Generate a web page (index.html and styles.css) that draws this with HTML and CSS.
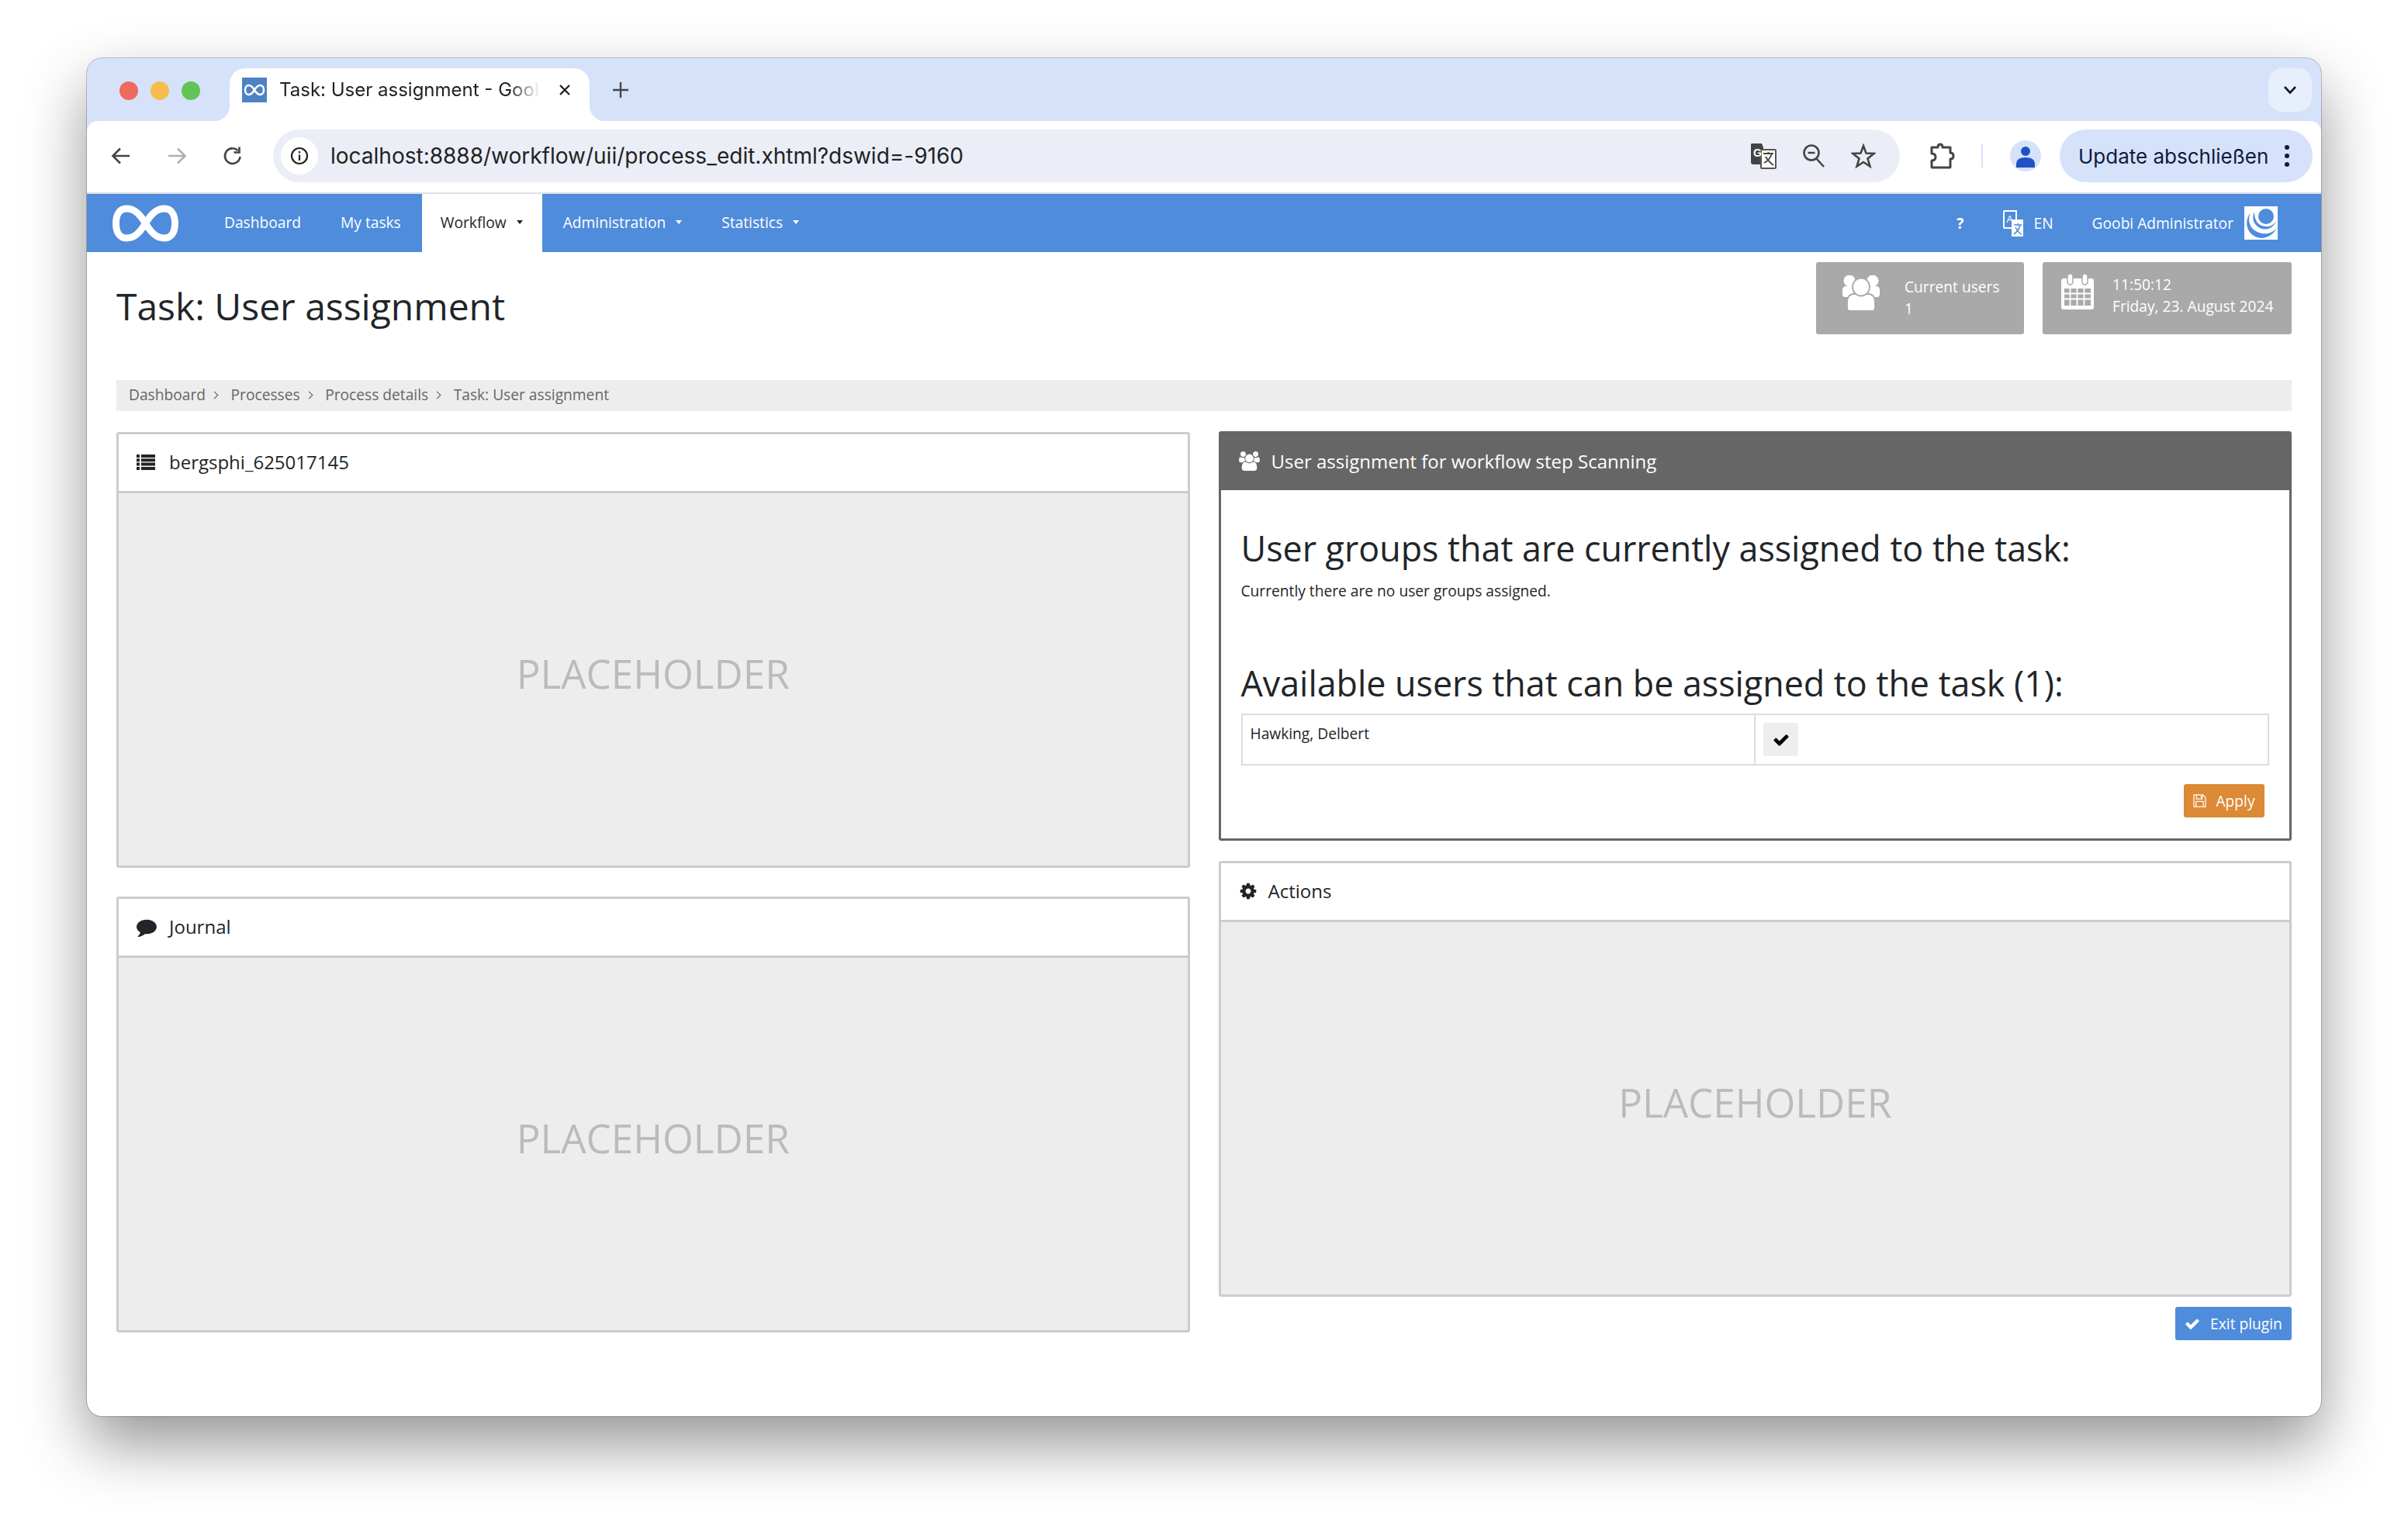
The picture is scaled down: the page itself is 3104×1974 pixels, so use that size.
FILE: index.html
```html
<!doctype html>
<html lang="en">
  <head>
    <meta charset="UTF-8" />
    <title>Task: User assignment - Goobi</title>
    <link rel="stylesheet" href="styles.css">
  </head>
  <body>
    <div class="window">
      <div class="tabstrip">
        <div class="lights">
          <span class="light light-red"></span>
          <span class="light light-yellow"></span>
          <span class="light light-green"></span>
        </div>
        <div class="tab">
          <span class="favicon">
            <svg viewBox="0 0 32 32" width="32" height="32"><path d="M16 16C13 11 11 10 8.500 10C6 10 4 12.500 4 16C4 19.500 6 22 8.500 22C11 22 13 21 16 16C19 11 21 10 23.500 10C26 10 28 12.500 28 16C28 19.500 26 22 23.500 22C21 22 19 21 16 16Z" fill="none" stroke="#fff" stroke-width="2.500"/></svg>
          </span>
          <span class="tab-title">Task: User assignment - Goobi</span>
          <svg class="tab-close" viewBox="0 0 20 20" width="20" height="20"><path d="M4 4L16 16M16 4L4 16" stroke="#222" stroke-width="2.400"/></svg>
        </div>
        <svg class="new-tab" viewBox="0 0 22 22" width="22" height="22"><path d="M11 1V21M1 11H21" stroke="#444" stroke-width="2.400"/></svg>
        <div class="tab-menu">
          <svg viewBox="0 0 18 12" width="18" height="12"><path d="M2 2L9 9.500L16 2" fill="none" stroke="#1a1a2a" stroke-width="2.600"/></svg>
        </div>
      </div>

      <div class="toolbar">
        <div class="tool-nav">
          <svg viewBox="0 0 26 26" width="26" height="26"><path d="M24 13H3M12 3.500L2.500 13L12 22.500" fill="none" stroke="#444" stroke-width="2.600"/></svg>
          <svg viewBox="0 0 26 26" width="26" height="26"><path d="M2 13H23M14 3.500L23.500 13L14 22.500" fill="none" stroke="#b0b0b0" stroke-width="2.600"/></svg>
          <svg viewBox="0 0 26 26" width="26" height="26"><path d="M22.500 14A9.800 9.800 0 1 1 19.500 6" fill="none" stroke="#444" stroke-width="2.600"/><path d="M21.500 1.500V8.500H14.500" fill="none" stroke="#444" stroke-width="2.600"/></svg>
        </div>
        <div class="address">
          <span class="site-info">
            <svg viewBox="0 0 24 24" width="24" height="24"><circle cx="12" cy="12" r="10" fill="none" stroke="#222" stroke-width="2.200"/><path d="M12 10.500V18M12 6V8.500" stroke="#222" stroke-width="2.200"/></svg>
          </span>
          <span class="url">localhost:8888/workflow/uii/process_edit.xhtml?dswid=-9160</span>
          <div class="address-icons">
            <svg viewBox="0 0 34 34" width="34" height="34"><path d="M2 1H15L17 6V28H4Q1 28 1 25V2Z" fill="#444"/><rect x="14" y="9" width="19" height="24" rx="1" fill="#fff" stroke="#555" stroke-width="2"/><text x="4" y="18" class="g-glyph">G</text><path d="M17 14H30M23.500 12V14M28 14C26 20 22 24 18 26M20 18C22 22 25 25 30 29" fill="none" stroke="#444" stroke-width="1.800"/></svg>
            <svg viewBox="0 0 32 32" width="32" height="32"><circle cx="13" cy="12" r="9.500" fill="none" stroke="#444" stroke-width="2.600"/><path d="M8.500 12H17.500M19 19L29 30" fill="none" stroke="#444" stroke-width="2.600"/></svg>
            <svg viewBox="0 0 32 32" width="32" height="32"><path d="M16 3L19.500 12.500L29.500 13L21.500 19.500L24.500 29.500L16 24L7.500 29.500L10.500 19.500L2.500 13L12.500 12.500Z" fill="none" stroke="#444" stroke-width="2.600"/></svg>
          </div>
        </div>
        <svg class="ext-icon" viewBox="0 0 34 34" width="34" height="34"><path d="M4 6H12Q12 2 15 2Q18 2 18 6H28V13Q32 13 32 17Q32 21 28 21V31Q28 32 27 32H5Q4 32 4 31V23Q9 23 9 18.500Q9 14 4 14Z" fill="none" stroke="#444" stroke-width="3" stroke-linejoin="round"/></svg>
        <span class="tool-sep"></span>
        <span class="profile">
          <svg viewBox="0 0 24 30" width="24" height="30"><circle cx="12" cy="8" r="6" fill="#1f52c4"/><path d="M0 29V25Q0 16 12 16Q24 16 24 25V29Z" fill="#1f52c4"/></svg>
        </span>
        <div class="update">
          <span>Update abschließen</span>
          <span class="update-dots"><i></i><i></i><i></i></span>
        </div>
      </div>

      <nav class="topnav">
        <svg class="logo" viewBox="0 0 85 48" width="85" height="48"><path d="M42.500 24C34 10 27 5 18 5C9 5 4.500 13 4.500 24C4.500 35 9 43 18 43C27 43 34 38 42.500 24C51 10 58 5 67 5C76 5 80.500 13 80.500 24C80.500 35 76 43 67 43C58 43 51 38 42.500 24Z" fill="none" stroke="#fff" stroke-width="9"/></svg>
        <a class="nav-item">Dashboard</a>
        <a class="nav-item">My tasks</a>
        <a class="nav-item nav-active">Workflow<span class="caret"></span></a>
        <a class="nav-item">Administration<span class="caret"></span></a>
        <a class="nav-item">Statistics<span class="caret"></span></a>
        <div class="nav-right">
          <span class="nav-help">?</span>
          <span class="nav-lang">
            <svg viewBox="0 0 26 34" width="26" height="34"><path d="M2 1H17V23H2Q1 23 1 22V2Q1 1 2 1Z" fill="none" stroke="#fff" stroke-width="2"/><rect x="11" y="12" width="15" height="22" rx="1" fill="#fff"/><text x="4.500" y="16" class="lang-glyph">A</text><path d="M14 19H24M19 17V19M22 19C21 24 18 28 14 31M16 22C18 26 20 29 24 31" fill="none" stroke="#4f8cdb" stroke-width="1.600"/></svg>
            EN
          </span>
          <span class="nav-user">Goobi Administrator</span>
          <svg class="avatar" viewBox="0 0 43 43" width="43" height="43"><rect width="43" height="43" fill="#fff"/><circle cx="28" cy="13" r="10" fill="#4f8cdb"/><path d="M13 7C13 16 16 25 28 26C34 26.500 39 23 42 18C39 25 33 30 26 29.500C15 28.500 8 18 13 7Z" fill="#4f8cdb"/><path d="M8 8C0 18 2 33 14 39C24 44 36 39 42 28C36 35 27 37 19 34C8 30 3 20 8 8Z" fill="#4f8cdb"/></svg>
        </div>
      </nav>

      <main class="page">
        <header class="page-head">
          <h1>Task: User assignment</h1>
          <div class="status-boxes">
            <div class="status status-users">
              <svg viewBox="0 0 48 46" width="48" height="46"><circle cx="9" cy="7" r="7.500" fill="#fff"/><circle cx="39" cy="7" r="7.500" fill="#fff"/><path d="M0 24V19Q0 14 5 14H16V28H3Q0 28 0 24ZM48 24V19Q48 14 43 14H32V28H45Q48 28 48 24Z" fill="#fff"/><path d="M6 42V34Q6 25 14 24H34Q42 25 42 34V42Q42 46 38 46H10Q6 46 6 42Z" fill="#fff" stroke="#a9a9a9" stroke-width="1.800"/><ellipse cx="24" cy="15" rx="11" ry="11.500" fill="#fff" stroke="#a9a9a9" stroke-width="1.800"/></svg>
              <div class="status-text"><span>Current users</span><span>1</span></div>
            </div>
            <div class="status status-time">
              <svg viewBox="0 0 42 46" width="42" height="46"><rect y="6" width="42" height="40" rx="3" fill="#fff"/><path d="M4 19H38V41H4Z" fill="#a9a9a9"/><path d="M11.500 19V41M20.500 19V41M29.500 19V41M4 25.500H38M4 32.500H38" stroke="#fff" stroke-width="1.800"/><rect x="8" y="0" width="7" height="14" rx="3.500" fill="#fff" stroke="#a9a9a9" stroke-width="1.500"/><rect x="27" y="0" width="7" height="14" rx="3.500" fill="#fff" stroke="#a9a9a9" stroke-width="1.500"/></svg>
              <div class="status-text"><span>11:50:12</span><span>Friday, 23. August 2024</span></div>
            </div>
          </div>
        </header>

        <ol class="breadcrumb">
          <li>Dashboard</li>
          <li>Processes</li>
          <li>Process details</li>
          <li>Task: User assignment</li>
        </ol>

        <div class="columns">
          <div class="column column-left">
            <section class="box">
              <h2 class="box-title title-list">
                <svg class="icon icon-list" viewBox="0 0 24 20" width="24" height="20"><path d="M0 0H4V4H0ZM6 0H24V4H6ZM0 5.300H4V9.300H0ZM6 5.300H24V9.300H6ZM0 10.600H4V14.600H0ZM6 10.600H24V14.600H6ZM0 16H4V20H0ZM6 16H24V20H6Z" fill="#212529"/></svg>
                bergsphi_625017145
              </h2>
              <div class="box-placeholder">PLACEHOLDER</div>
            </section>
            <section class="box">
              <h2 class="box-title">
                <svg class="icon icon-comment" viewBox="0 0 1792 1792" width="26" height="26"><path fill="#212529" d="M1792 896q0 174-120 321.500t-326 233-450 85.500q-70 0-145-8-198 175-460 242-49 14-114 22-17 2-30.500-9t-17.500-29v-1q-3-4-.5-12t2-10 4.500-9.500l6-9 7-8.500 8-9q7-8 31-34.500t34.500-38 31-39.500 32.500-51 27-59 26-76q-157-89-247.500-220t-90.500-281q0-130 71-248.500t191-204.500 286-136.500 348-50.500q244 0 450 85.500t326 233 120 321.500z"/></svg>
                Journal
              </h2>
              <div class="box-placeholder">PLACEHOLDER</div>
            </section>
          </div>

          <div class="column column-right">
            <section class="box box-action">
              <h2 class="box-title box-title-dark">
                <svg class="icon" viewBox="0 0 1920 1792" width="27" height="25"><path fill="#fff" d="M593 896q-162 5-265 128h-134q-82 0-138-40.500t-56-118.500q0-353 124-353 6 0 43.500 21t97.500 42.500 119 21.500q67 0 133-23-5 37-5 66 0 139 81 256zm1071 637q0 120-73 189.500t-194 69.500h-874q-121 0-194-69.500t-73-189.500q0-53 3.500-103.500t14-109 26.500-108.500 43-97.500 62-81 85.500-53.500 111.500-20q10 0 43 21.500t73 48 107 48 135 21.500 135-21.500 107-48 73-48 43-21.500q61 0 111.500 20t85.500 53.500 62 81 43 97.500 26.500 108.500 14 109 3.500 103.500zm-1024-1277q0 106-75 181t-181 75-181-75-75-181 75-181 181-75 181 75 75 181zm704 384q0 159-112.500 271.500t-271.500 112.500-271.500-112.500-112.500-271.500 112.500-271.500 271.500-112.500 271.500 112.500 112.500 271.500zm576 225q0 78-56 118.500t-138 40.500h-134q-103-123-265-128 81-117 81-256 0-29-5-66 66 23 133 23 59 0 119-21.500t97.500-42.500 43.500-21q124 0 124 353zm-128-609q0 106-75 181t-181 75-181-75-75-181 75-181 181-75 181 75 75 181z"/></svg>
                User assignment for workflow step Scanning
              </h2>
              <div class="box-body">
                <h3>User groups that are currently assigned to the task:</h3>
                <p class="note">Currently there are no user groups assigned.</p>
                <h3 class="h3-second">Available users that can be assigned to the task (1):</h3>
                <table class="users">
                  <tr>
                    <td class="users-name">Hawking, Delbert</td>
                    <td class="users-action">
                      <span class="check-btn">
                        <svg viewBox="0 0 1792 1792" width="22" height="22"><path d="M1671 566q0 40-28 68l-724 724-136 136q-28 28-68 28t-68-28l-136-136-362-362q-28-28-28-68t28-68l136-136q28-28 68-28t68 28l294 295 656-657q28-28 68-28t68 28l136 136q28 28 28 68z"/></svg>
                      </span>
                    </td>
                  </tr>
                </table>
                <div class="apply-row">
                  <button class="btn btn-orange">
                    <svg viewBox="0 0 18 18" width="17" height="17"><path d="M1 1H13.500L17 4.500V17H1Z" fill="none" stroke="#fff" stroke-width="1.300"/><path d="M4.500 1V6.500H12.500V1M11 2.500V5M4 17V10H14V17" fill="none" stroke="#fff" stroke-width="1.300"/></svg>
                    Apply
                  </button>
                </div>
              </div>
            </section>
            <section class="box">
              <h2 class="box-title title-cog">
                <svg class="icon icon-cog" viewBox="0 0 1792 1792" width="24" height="24"><path fill="#212529" d="M1152 896q0-106-75-181t-181-75-181 75-75 181 75 181 181 75 181-75 75-181zm512-109v222q0 12-8 23t-20 13l-185 28q-19 54-39 91 35 50 107 138 10 12 10 25t-9 23q-27 37-99 108t-94 71q-12 0-26-9l-138-108q-44 23-91 38-16 136-29 186-7 28-36 28h-222q-14 0-24.500-8.500t-11.500-21.500l-28-184q-49-16-90-37l-141 107q-10 9-25 9-14 0-25-11-126-114-165-168-7-10-7-23 0-12 8-23 15-21 51-66.500t54-70.500q-27-50-41-99l-183-27q-13-2-21-12.500t-8-23.500v-222q0-12 8-23t19-13l186-28q14-46 39-92-40-57-107-138-10-12-10-24 0-10 9-23 26-36 98.500-107.500t94.500-71.500q13 0 26 10l138 107q44-23 91-38 16-136 29-186 7-28 36-28h222q14 0 24.500 8.500t11.500 21.500l28 184q49 16 90 37l142-107q9-9 24-9 13 0 25 10 129 119 165 170 7 8 7 22 0 12-8 23-15 21-51 66.500t-54 70.500q26 50 41 98l183 28q13 2 21 12.500t8 23.500z"/></svg>
                Actions
              </h2>
              <div class="box-placeholder">PLACEHOLDER</div>
            </section>
            <div class="exit-row">
              <button class="btn btn-blue">
                <svg viewBox="0 0 1792 1792" width="20" height="20"><path fill="#fff" d="M1671 566q0 40-28 68l-724 724-136 136q-28 28-68 28t-68-28l-136-136-362-362q-28-28-28-68t28-68l136-136q28-28 68-28t68 28l294 295 656-657q28-28 68-28t68 28l136 136q28 28 28 68z"/></svg>
                Exit plugin
              </button>
            </div>
          </div>
        </div>
      </main>
    </div>
  </body>
</html>
```

FILE: styles.css
```css
* {
  box-sizing: border-box;
}

html,
body {
  margin: 0;
  background: #fff;
}

body {
  width: 3104px;
  height: 1974px;
  overflow: hidden;
  padding: 75px 112px 0;
  font-family: "Open Sans", sans-serif;
  color: #212529;
}

.window {
  width: 2880px;
  height: 1751px;
  border-radius: 20px;
  overflow: hidden;
  display: flex;
  flex-direction: column;
  background: #d6e2fa;
}

body::before {
  content: "";
  position: absolute;
  left: 112px;
  top: 75px;
  width: 2880px;
  height: 1751px;
  border-radius: 20px;
  box-shadow: 0 0 0 1px rgba(0, 0, 0, 0.22), 0 36px 80px rgba(0, 0, 0, 0.42);
}

/* browser chrome */
.tabstrip {
  height: 81px;
  flex: none;
  display: flex;
  align-items: flex-start;
  background: #d6e2fa;
}

.lights {
  display: flex;
  gap: 16px;
  padding: 30px 0 0 42px;
}

.light {
  width: 24px;
  height: 24px;
  border-radius: 50%;
}

.light-red {
  background: #ee6a5f;
}

.light-yellow {
  background: #f5bd4f;
}

.light-green {
  background: #61c454;
}

.tab {
  position: relative;
  margin: 13px 0 0 38px;
  width: 464px;
  height: 68px;
  background: #fff;
  border-radius: 20px 20px 0 0;
  display: flex;
  align-items: flex-start;
  padding: 12px 0 0 16px;
  font-family: Inter, sans-serif;
  font-size: 24px;
}

.tab::before,
.tab::after {
  content: "";
  position: absolute;
  bottom: 0;
  width: 20px;
  height: 20px;
}

.tab::before {
  left: -20px;
  background: radial-gradient(circle at 0 0, transparent 20px, #fff 20.500px);
}

.tab::after {
  right: -20px;
  background: radial-gradient(circle at 100% 0, transparent 20px, #fff 20.500px);
}

.favicon {
  width: 32px;
  height: 32px;
  background: #4f82c4;
  flex: none;
  display: flex;
}

.tab-title {
  width: 336px;
  margin-left: 16px;
  line-height: 32px;
  white-space: nowrap;
  overflow: hidden;
  color: #222;
  -webkit-mask-image: linear-gradient(90deg, #000 88%, transparent);
  mask-image: linear-gradient(90deg, #000 88%, transparent);
}

.tab-close {
  margin: 6px 0 0 22px;
}

.new-tab {
  margin: 30px 0 0 29px;
}

.tab-menu {
  margin: 13px 12px 0 auto;
  width: 56px;
  height: 56px;
  border-radius: 18px;
  background: #e8effc;
  display: flex;
  align-items: center;
  justify-content: center;
}

.toolbar {
  height: 94px;
  flex: none;
  display: flex;
  align-items: center;
  background: #fff;
  border-bottom: 2px solid #dfe1e5;
  border-radius: 14px 14px 0 0;
  padding-bottom: 2px;
}

.tool-nav {
  display: flex;
  gap: 46px;
  padding-left: 31px;
  width: 240px;
}

.address {
  width: 2097px;
  height: 68px;
  border-radius: 34px;
  background: #ebeef7;
  display: flex;
  align-items: center;
  padding-left: 10px;
}

.site-info {
  width: 48px;
  height: 48px;
  border-radius: 50%;
  background: #fff;
  display: flex;
  align-items: center;
  justify-content: center;
  flex: none;
}

.url {
  margin-left: 16px;
  font-family: Inter, sans-serif;
  font-size: 28px;
  color: #222;
  white-space: nowrap;
}

.address-icons {
  margin-left: auto;
  display: flex;
  align-items: center;
  gap: 32px;
  padding-right: 31px;
}

.g-glyph {
  font-family: "Liberation Sans", sans-serif;
  font-size: 14px;
  font-weight: 700;
  fill: #fff;
}

.ext-icon {
  margin-left: 37px;
}

.tool-sep {
  width: 2px;
  height: 30px;
  margin-left: 34px;
  background: #d6e2fa;
}

.profile {
  width: 40px;
  height: 40px;
  margin-left: 35px;
  border-radius: 50%;
  background: #d6e2fa;
  display: flex;
  align-items: flex-end;
  justify-content: center;
  padding-bottom: 4px;
}

.update {
  margin-left: 24px;
  width: 326px;
  height: 68px;
  border-radius: 34px;
  background: #d6e2fa;
  display: flex;
  align-items: center;
  padding-left: 24px;
  font-family: Inter, sans-serif;
  font-size: 26px;
  color: #0f1b3d;
  white-space: nowrap;
}

.update-dots {
  margin-left: auto;
  margin-right: 30px;
  display: flex;
  flex-direction: column;
  gap: 5px;
}

.update-dots i {
  display: block;
  width: 6px;
  height: 6px;
  border-radius: 50%;
  background: #0f1b3d;
}

/* application nav */
.topnav {
  height: 75px;
  flex: none;
  display: flex;
  align-items: stretch;
  background: #4f8cdb;
  color: #fff;
  font-size: 19.200px;
  line-height: 1;
  padding-left: 33px;
}

.logo {
  align-self: center;
  margin-right: 33.500px;
}

.nav-item {
  display: flex;
  align-items: center;
  padding: 0 25.500px 2px;
  white-space: nowrap;
}

.nav-active {
  margin: 0 1.500px;
  padding: 0 25px 2px 24px;
  background: #fff;
  color: #212529;
}

.caret {
  margin-left: 13px;
  border-top: 5px solid currentColor;
  border-left: 4px solid transparent;
  border-right: 4px solid transparent;
}

.nav-right {
  margin-left: auto;
  padding-right: 56px;
  display: flex;
  align-items: center;
}

.nav-help {
  font-weight: 700;
  margin-right: 51px;
}

.nav-lang {
  display: flex;
  align-items: center;
  gap: 13px;
  margin-right: 50px;
}

.lang-glyph {
  font-family: "Open Sans", sans-serif;
  font-size: 13px;
  fill: #fff;
}

.avatar {
  margin-left: 14px;
}

/* page */
.page {
  flex: 1;
  padding: 13px 38px 0;
  background: #fff;
}

.page-head {
  display: flex;
  justify-content: space-between;
  align-items: flex-start;
  height: 152px;
}

h1 {
  margin: 0;
  padding-top: 23px;
  font-size: 48px;
  font-weight: 400;
  line-height: 68px;
}

.status-boxes {
  display: flex;
  gap: 24px;
}

.status {
  height: 93px;
  border-radius: 3px;
  background: #a9a9a9;
  color: #fff;
  display: flex;
  font-size: 19.200px;
}

.status-users {
  width: 268px;
  padding: 17px 0 0 34px;
  gap: 32px;
}

.status-time {
  width: 321px;
  padding: 15px 0 0 24px;
  gap: 24px;
}

.status-text {
  display: flex;
  flex-direction: column;
  line-height: 28px;
}

.status-users .status-text {
  padding-top: 1px;
}

.breadcrumb {
  list-style: none;
  margin: 0 0 27px;
  height: 40px;
  padding: 0 16px 3px;
  background: #ededed;
  color: #666;
  font-size: 19.200px;
  display: flex;
  align-items: center;
  gap: 32.500px;
}

.breadcrumb li {
  position: relative;
}

.breadcrumb li:not(:last-child)::after {
  content: "";
  position: absolute;
  right: -15px;
  top: 11px;
  width: 6px;
  height: 6px;
  border-top: 1.500px solid #555;
  border-right: 1.500px solid #555;
  transform: rotate(45deg);
}

.columns {
  display: grid;
  grid-template-columns: 1fr 1fr;
  gap: 37px;
}

.column {
  display: flex;
  flex-direction: column;
}

.column-left {
  gap: 37px;
}

.column-right {
  gap: 26px;
  margin-top: -1px;
}

.box {
  border: 3px solid #ccc;
  border-radius: 3px;
  background: #fff;
}

.box-title {
  margin: 0;
  height: 73px;
  padding: 0 0 2px 23px;
  display: flex;
  align-items: center;
  gap: 16px;
  font-size: 24px;
  font-weight: 400;
}

.title-list {
  gap: 18px;
}

.title-cog {
  gap: 14px;
}

.box-placeholder {
  height: 483px;
  padding-bottom: 17px;
  border-top: 3px solid #ccc;
  background: #ededed;
  color: #bbb;
  font-size: 51.200px;
  display: flex;
  align-items: center;
  justify-content: center;
}

.box-action {
  border-color: #666;
}

.box-title-dark {
  background: #666;
  color: #fff;
  gap: 15px;
}

.box-body {
  padding: 0 26px;
  height: 449px;
}

h3 {
  margin: 0;
  padding-top: 43px;
  font-size: 44.800px;
  font-weight: 400;
  line-height: 64px;
}

.h3-second {
  padding-top: 74px;
}

.note {
  margin: 10px 0 0;
  font-size: 19.200px;
  line-height: 26px;
}

.users {
  width: 100%;
  margin-top: 7px;
  border-collapse: collapse;
  table-layout: fixed;
}

.users td {
  height: 65px;
  border: 2px solid #ddd;
  vertical-align: top;
  padding: 0;
  font-size: 19.200px;
}

.users-name {
  padding: 10px 0 0 10px !important;
}

.users-action {
  padding: 10px !important;
}

.check-btn {
  display: flex;
  align-items: center;
  justify-content: center;
  width: 45px;
  height: 43px;
  border-radius: 3px;
  background: #eee;
}

.apply-row {
  display: flex;
  justify-content: flex-end;
  padding: 24px 6px 0 0;
}

.btn {
  height: 43px;
  border: 0;
  border-radius: 3px;
  padding: 0;
  color: #fff;
  font-family: inherit;
  font-size: 19.200px;
  display: flex;
  align-items: center;
  justify-content: center;
}

.btn-orange {
  width: 104px;
  gap: 12px;
  background: #dc8a35;
}

.btn-blue {
  width: 150px;
  gap: 13px;
  background: #4f8cdb;
}

.exit-row {
  display: flex;
  justify-content: flex-end;
  margin-top: -13px;
}
```
